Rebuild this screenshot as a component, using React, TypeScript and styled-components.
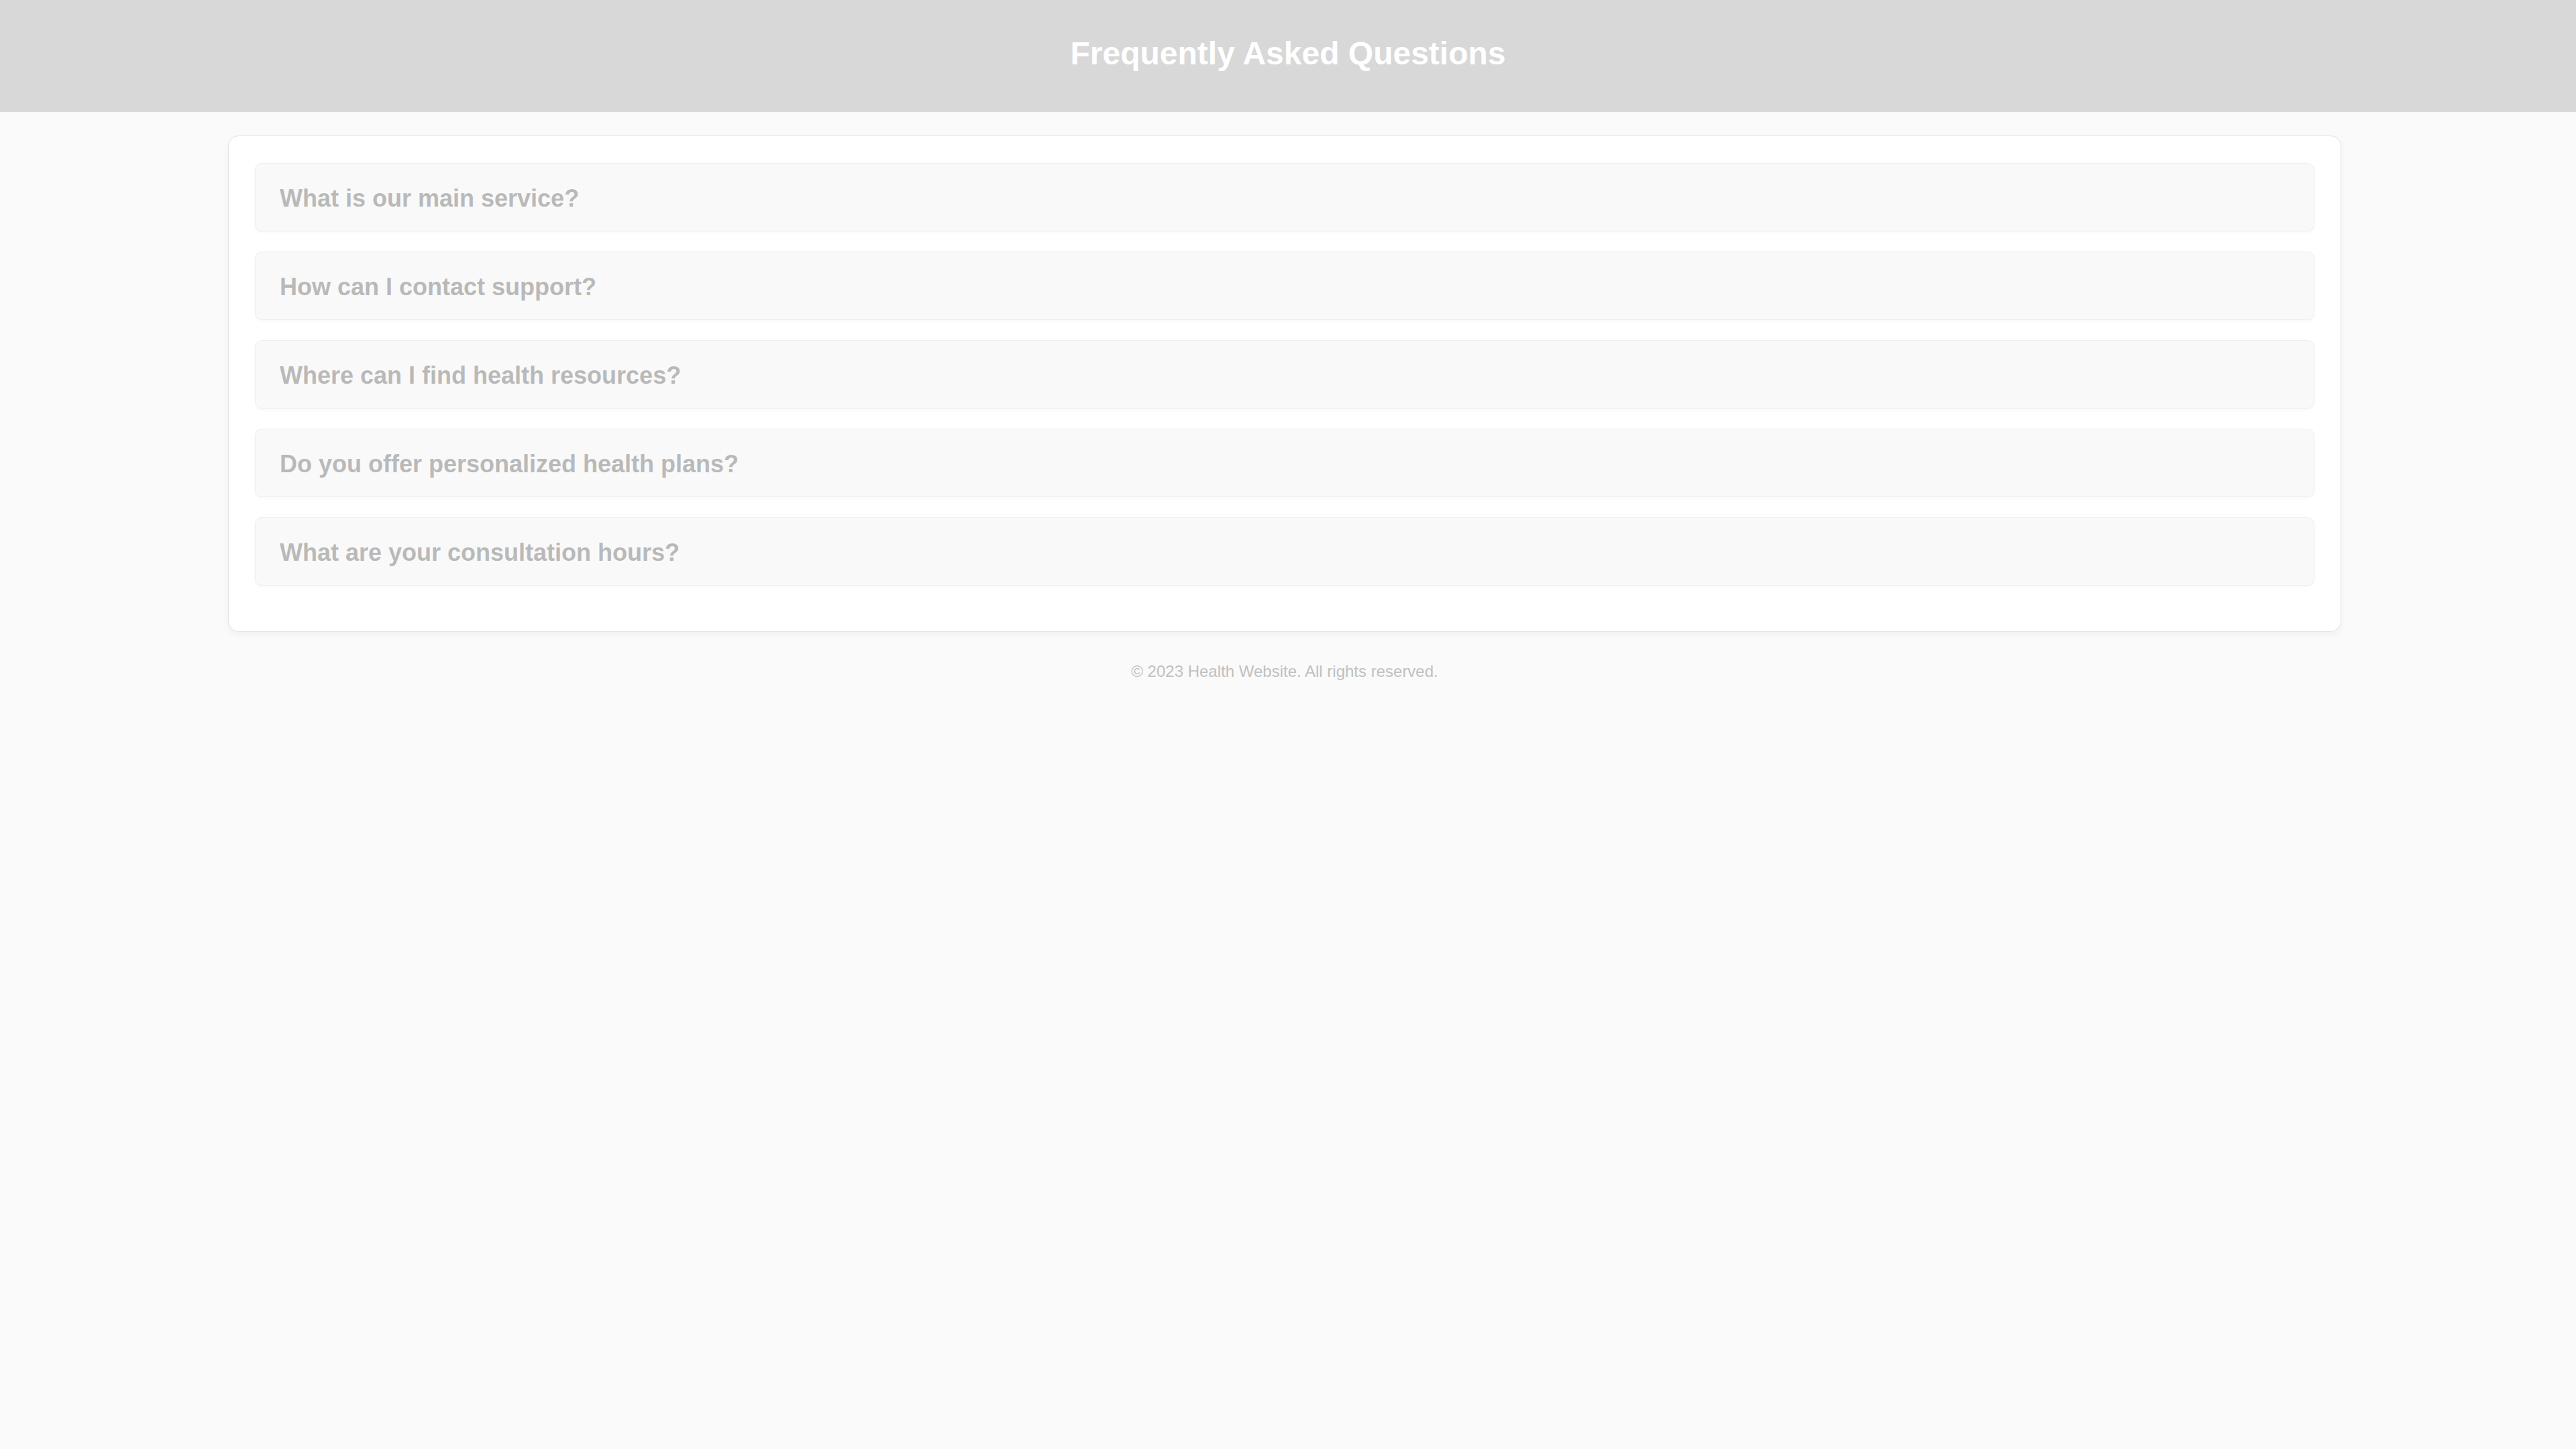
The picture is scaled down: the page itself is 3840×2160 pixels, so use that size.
import React from "react";
import styled, { createGlobalStyle } from "styled-components";

const GlobalStyle = createGlobalStyle`
  html, body {
    margin: 0;
    padding: 0;
    background: #fafafa;
    font-family: "Liberation Sans", Arial, sans-serif;
  }
`;

const Header = styled.header`
  height: 167px;
  background: #d8d8d8;
  display: flex;
  align-items: center;
  justify-content: center;
  padding-bottom: 8px;
  box-sizing: border-box;
`;

const Title = styled.h1`
  margin: 0;
  color: #ffffff;
  font-size: 48px;
  line-height: 1;
  font-weight: 700;
`;

const Main = styled.main`
  padding: 35px 350px 0 340px;
`;

const Card = styled.section`
  background: #ffffff;
  border: 1px solid #e3e3e3;
  border-radius: 16px;
  box-shadow: 0 4px 10px rgba(0, 0, 0, 0.04);
  padding: 40px 39px 9px;
  display: flex;
  flex-direction: column;
`;

const Item = styled.div`
  height: 102px;
  box-sizing: border-box;
  background: #f9f9f9;
  border: 1px solid #efefef;
  border-radius: 10px;
  box-shadow: 0 2px 4px rgba(0, 0, 0, 0.03);
  display: flex;
  align-items: center;
  padding: 4px 36px 0;
  margin: 0 0 30px;
`;

const Question = styled.h3`
  margin: 0;
  font-size: 36px;
  font-weight: 700;
  color: #b9b9b9;
  line-height: 1;
`;

const CardEnd = styled.div`
  height: 29px;
`;

const Footer = styled.footer`
  text-align: center;
  padding-top: 45px;
  font-size: 24px;
  color: #c0c0c0;
`;

const questions = [
  "What is our main service?",
  "How can I contact support?",
  "Where can I find health resources?",
  "Do you offer personalized health plans?",
  "What are your consultation hours?",
];

export default function App() {
  return (
    <>
      <GlobalStyle />
      <Header>
        <Title>Frequently Asked Questions</Title>
      </Header>
      <Main>
        <Card>
          {questions.map((q) => (
            <Item key={q}>
              <Question>{q}</Question>
            </Item>
          ))}
          <CardEnd />
        </Card>
        <Footer>© 2023 Health Website. All rights reserved.</Footer>
      </Main>
    </>
  );
}
